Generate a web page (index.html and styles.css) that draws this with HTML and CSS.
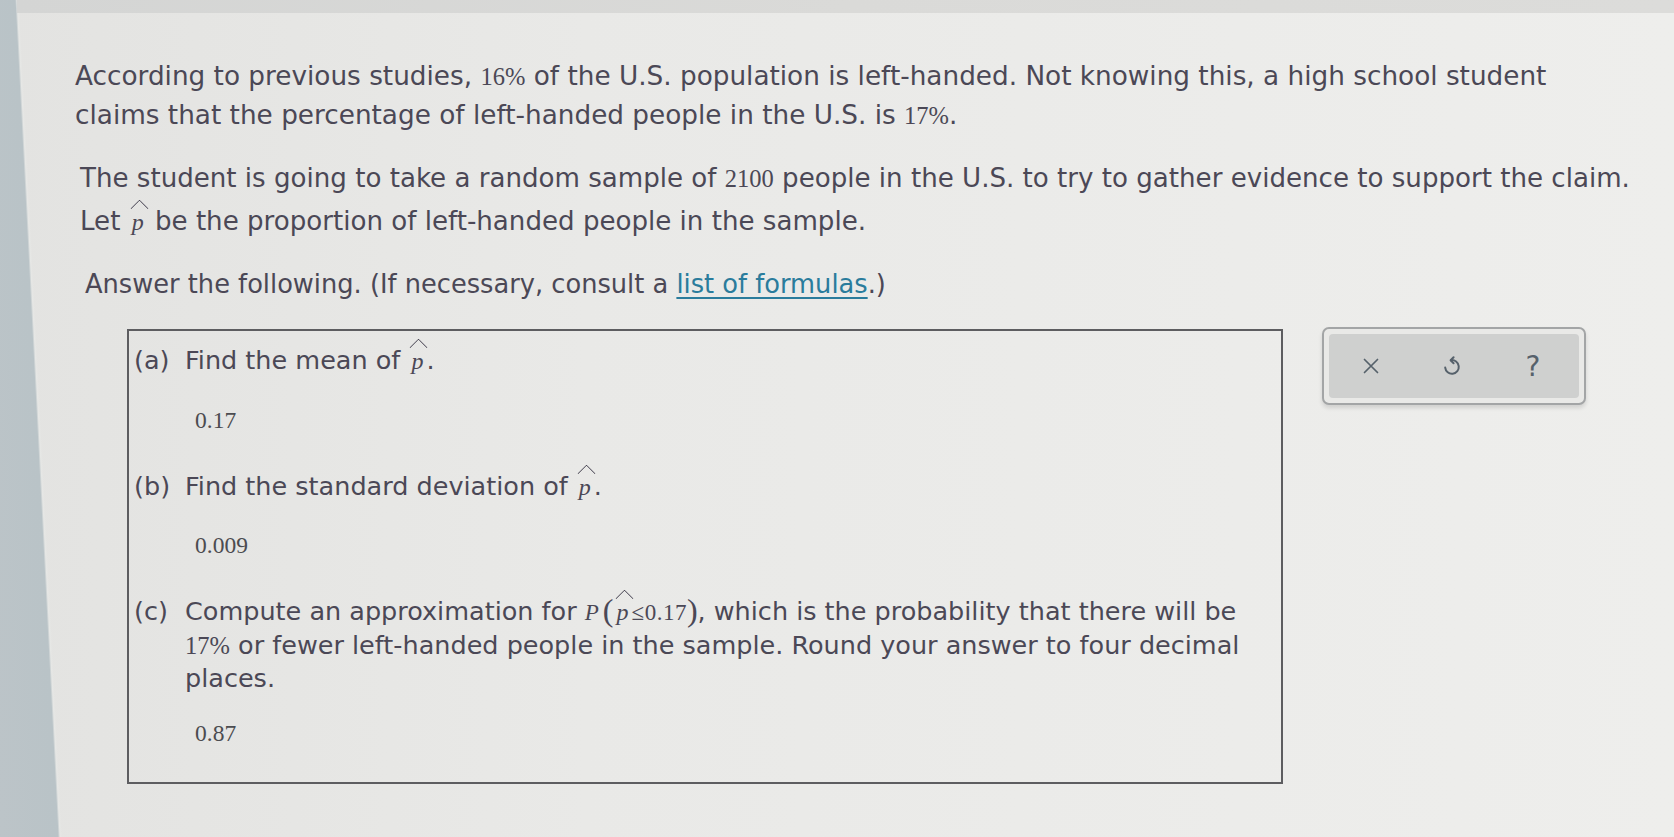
FILE: index.html
```html
<!DOCTYPE html>
<html lang="en">
<head>
<meta charset="utf-8">
<title>Question</title>
<link rel="stylesheet" href="styles.css">
</head>
<body>
<div class="topband"></div>
<main class="page">
  <p class="para p1">According to previous studies, <span class="num">16%</span> of the U.S. population is left-handed. Not knowing this, a high school student<br>claims that the percentage of left-handed people in the U.S. is <span class="num">17%</span>.</p>
  <p class="para p2">The student is going to take a random sample of <span class="num">2100</span> people in the U.S. to try to gather evidence to support the claim.<br>Let <span class="phat">p</span> be the proportion of left-handed people in the sample.</p>
  <p class="para p3">Answer the following. (If necessary, consult a <a class="link" href="#">list of formulas</a>.)</p>

  <div class="row">
    <section class="box">
      <div class="q qa"><span class="lbl">(a)</span><span class="qtext">Find the mean of <span class="phat">p</span>.</span></div>
      <div class="ans aa">0.17</div>
      <div class="q qb"><span class="lbl">(b)</span><span class="qtext">Find the standard deviation of <span class="phat">p</span>.</span></div>
      <div class="ans ab">0.009</div>
      <div class="q qc"><span class="lbl">(c)</span><span class="qtext">Compute an approximation for <span class="mi">P</span><span class="paren">(</span><span class="phat">p</span><span class="num sm">≤0.17</span><span class="paren">)</span>, which is the probability that there will be<br><span class="num">17%</span> or fewer left-handed people in the sample. Round your answer to four decimal<br>places.</span></div>
      <div class="ans ac">0.87</div>
    </section>

    <div class="tools">
      <div class="tools-inner">
        <span class="tool">
          <svg width="22" height="22" viewBox="0 0 22 22"><path d="M4.5 4.5 L17.5 17.5 M17.5 4.5 L4.5 17.5" stroke="#56616b" stroke-width="1.7" fill="none" stroke-linecap="round"/></svg>
        </span>
        <span class="tool">
          <svg width="24" height="24" viewBox="0 0 24 24"><path d="M11 6.2 A6.8 6.8 0 1 1 5.2 13.6" stroke="#56616b" stroke-width="2" fill="none" stroke-linecap="round"/><path d="M13.6 3.2 L10.6 6.2 L13.6 9.2" stroke="#56616b" stroke-width="2" fill="none" stroke-linecap="round" stroke-linejoin="round"/></svg>
        </span>
        <span class="tool qmark">?</span>
      </div>
    </div>
  </div>
</main>
</body>
</html>
```

FILE: styles.css
```css
html, body {
  margin: 0;
  padding: 0;
}

body {
  width: 1674px;
  height: 837px;
  overflow: hidden;
  font-family: "DejaVu Sans", Verdana, sans-serif;
  font-size: 26.3px;
  color: #4b4856;
  background:
    linear-gradient(87.06deg, #bcc4c8 0, #b9c3c7 58px, #e6e7e5 60px, transparent 62px),
    linear-gradient(to right, #e3e3e1 0%, #e9e9e7 35%, #eeeeec 100%);
}

.topband {
  height: 13px;
  margin-left: 17px;
  background: linear-gradient(to right, #d4d5d4, #dadad8 50%, #dcdcda);
}

.page {
  padding-top: 44px;
}

.para {
  margin: 0;
  line-height: 38px;
  white-space: nowrap;
}

.p1 { padding-left: 75px; }
.p2 { padding-left: 80px; margin-top: 22px; line-height: 43px; font-size: 26.1px; }
.p3 { padding-left: 85px; margin-top: 22px; font-size: 25.7px; }

.num {
  font-family: "Liberation Serif", "Times New Roman", serif;
  font-size: 24.5px;
}

.num.sm { font-size: 23px; letter-spacing: 0.5px; }

.mi {
  font-family: "Liberation Serif", "Times New Roman", serif;
  font-style: italic;
  font-size: 23px;
  margin-right: 4px;
}

.paren {
  font-family: "Liberation Serif", "Times New Roman", serif;
  font-size: 32px;
  line-height: 0;
  vertical-align: -1px;
}

.phat {
  position: relative;
  display: inline-block;
  font-family: "Liberation Serif", "Times New Roman", serif;
  font-style: italic;
  font-size: 24px;
  line-height: 1;
  padding: 0 3px;
}

.phat::before {
  content: "";
  position: absolute;
  left: 4px;
  top: -8px;
  width: 12px;
  height: 12px;
  border-top: 1.5px solid #4b4856;
  border-left: 1.5px solid #4b4856;
  border-top-left-radius: 2px;
  transform: rotate(45deg);
}

.link {
  color: #2a7c9c;
  text-decoration: underline;
  text-underline-offset: 4px;
  text-decoration-thickness: 1.5px;
}

.row {
  display: flex;
  align-items: flex-start;
  margin-top: 26px;
}

.box {
  margin-left: 127px;
  width: 1156px;
  border: 2px solid #5d5d60;
  padding: 11px 0 34px 5px;
  box-sizing: border-box;
  font-size: 25.5px;
}

.q {
  display: flex;
  line-height: 36px;
  white-space: nowrap;
}

.lbl {
  flex: 0 0 51px;
}

.ans {
  font-family: "Liberation Serif", "Times New Roman", serif;
  font-size: 23.5px;
  line-height: 30px;
  padding-left: 61px;
  color: #4c4c50;
}

.aa { margin-top: 27px; }
.qb { margin-top: 33px; }
.ab { margin-top: 26px; }
.qc { margin-top: 35px; line-height: 32px; }
.ac { margin-top: 24px; }

.tools {
  margin-left: 39px;
  margin-top: -2px;
  width: 264px;
  height: 78px;
  box-sizing: border-box;
  border: 2px solid #a3a5a6;
  border-radius: 7px;
  background: #e9e9e7;
  padding: 5px;
  box-shadow: 0 3px 4px rgba(0, 0, 0, 0.12);
}

.tools-inner {
  height: 100%;
  border-radius: 4px;
  background: #cfd0cf;
  display: flex;
  align-items: center;
  gap: 51px;
  padding-left: 27px;
}

.tool {
  display: flex;
  align-items: center;
  justify-content: center;
  width: 30px;
  height: 30px;
}

.qmark {
  font-family: "DejaVu Sans", sans-serif;
  font-size: 28px;
  color: #56616b;
  font-weight: 400;
}
```
